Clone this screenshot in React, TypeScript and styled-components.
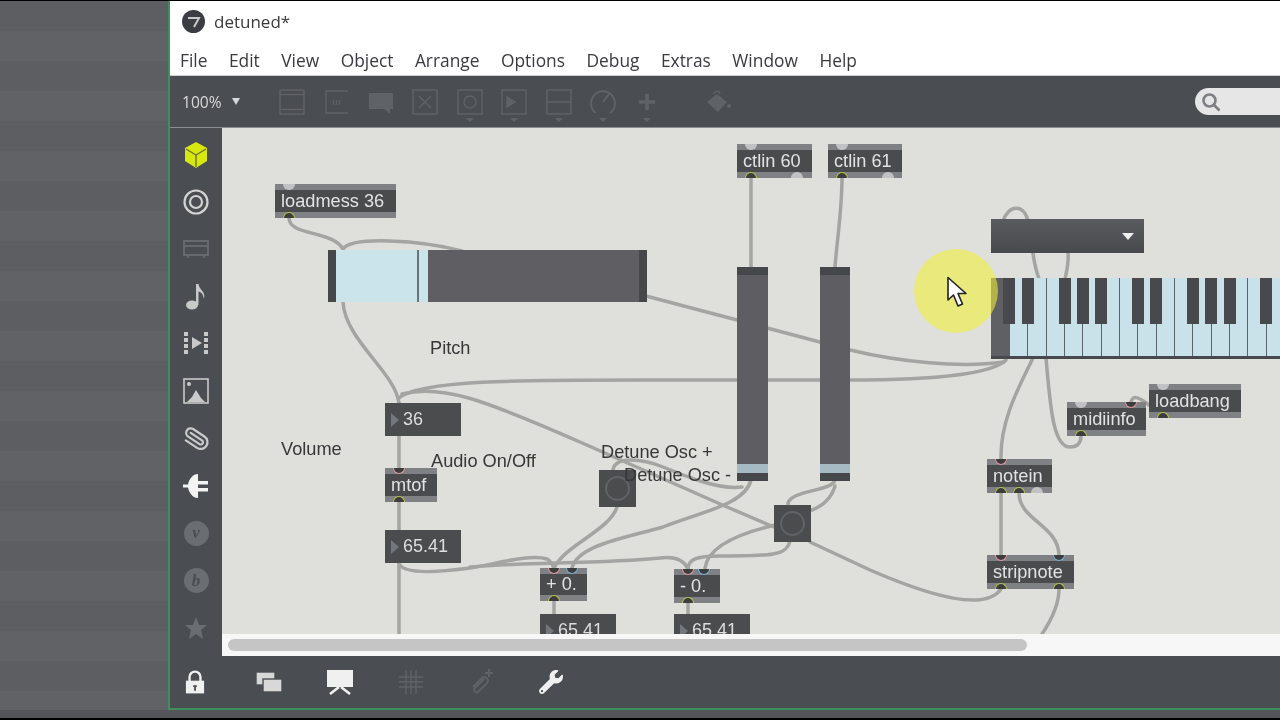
import React from 'react'
import styled, { createGlobalStyle } from 'styled-components'
import { FaWrench } from 'react-icons/fa'
import { Paperclip } from 'lucide-react'

const GlobalStyle = createGlobalStyle`
  html, body {
    margin: 0;
    padding: 0;
    background: #000;
    overflow: hidden;
  }
`

type Port = { at: number; kind: 'in' | 'cold' | 'out' | 'free'; side: 'top' | 'bottom' }

type PatchObject = { x: number; y: number; w: number; h: number; label: string; ports: Port[] }

const top = (at: number, kind: Port['kind']): Port => ({ at, kind, side: 'top' })
const bottom = (at: number, kind: Port['kind']): Port => ({ at, kind, side: 'bottom' })

const objects: PatchObject[] = [
  { x: 275, y: 184, w: 121, h: 34, label: 'loadmess 36', ports: [top(14, 'free'), bottom(14, 'out')] },
  { x: 737, y: 144, w: 75, h: 34, label: 'ctlin 60', ports: [top(14, 'free'), bottom(14, 'out'), bottom(60, 'free')] },
  { x: 828, y: 144, w: 74, h: 34, label: 'ctlin 61', ports: [top(14, 'free'), bottom(14, 'out'), bottom(60, 'free')] },
  { x: 385, y: 468, w: 52, h: 34, label: 'mtof', ports: [top(14, 'in'), bottom(14, 'out')] },
  { x: 540, y: 568, w: 47, h: 33, label: '+ 0.', ports: [top(14, 'in'), top(32, 'cold'), bottom(14, 'out')] },
  { x: 674, y: 569, w: 46, h: 34, label: '- 0.', ports: [top(14, 'in'), top(30, 'cold'), bottom(14, 'out')] },
  { x: 987, y: 459, w: 65, h: 34, label: 'notein', ports: [top(14, 'in'), bottom(14, 'out'), bottom(32, 'out'), bottom(50, 'free')] },
  { x: 987, y: 555, w: 87, h: 34, label: 'stripnote', ports: [top(14, 'in'), top(72, 'cold'), bottom(14, 'out'), bottom(72, 'out')] },
  { x: 1067, y: 402, w: 79, h: 34, label: 'midiinfo', ports: [top(14, 'free'), top(64, 'in'), bottom(14, 'out')] },
  { x: 1149, y: 384, w: 92, h: 34, label: 'loadbang', ports: [top(14, 'free'), bottom(14, 'out')] },
]

const numberBoxes = [
  { x: 385, y: 403, label: '36' },
  { x: 385, y: 530, label: '65.41' },
  { x: 540, y: 614, label: '65.41' },
  { x: 674, y: 614, label: '65.41' },
]

const comments = [
  { x: 430, y: 337, label: 'Pitch' },
  { x: 281, y: 438, label: 'Volume' },
  { x: 431, y: 450, label: 'Audio On/Off' },
  { x: 601, y: 441, label: 'Detune Osc +' },
  { x: 624, y: 464, label: 'Detune Osc -' },
]

const wires = [
  'M289 218C289 236 332 230 343 249',
  'M343 249C352 236 420 240 462 251',
  'M343 302C345 340 395 372 399 403',
  'M399 403V634',
  'M399 398C420 380 520 380 640 380L850 380C920 380 990 376 1006 360',
  'M646 296L737 320L850 350C900 362 960 368 1004 362',
  'M402 394C440 384 480 398 580 442L727 507L774 527',
  'M810 542L870 570C930 596 985 612 1001 589',
  'M751 178V267',
  'M842 178C842 210 837 240 835 267',
  'M617 507C610 530 565 545 554 568',
  'M751 480C745 505 700 512 663 527C625 538 578 545 572 568',
  'M399 563C402 575 440 572 470 568C500 563 530 554 547 559C551 561 552 564 554 568',
  'M470 567C520 562 600 564 660 558C675 556 684 560 688 569',
  'M742 487C720 490 690 478 663 467C640 458 612 456 613 472',
  'M835 480C832 492 785 490 788 506',
  'M835 486C832 496 825 505 812 510',
  'M775 525C745 532 708 545 705 568',
  'M790 540C788 556 770 556 720 556C695 556 688 560 688 569',
  'M1001 493V555',
  'M1019 493C1019 520 1058 525 1059 555',
  'M1059 589C1059 605 1050 622 1042 634',
  'M1033 358C1020 385 1000 420 1001 459',
  'M1046 358C1050 400 1052 447 1070 447C1078 447 1081 442 1081 436',
  'M1131 402C1133 394 1140 398 1149 405',
  'M1003 221C1008 205 1024 203 1028 221',
  'M1033 253C1034 262 1036 270 1039 279',
  'M1068 253C1069 262 1067 270 1065 279',
  'M554 601V614',
  'M688 603V614',
]

const blackKeys = [12.3, 31, 67.7, 86, 104.3, 140.6, 159.3, 196, 214.3, 232.6, 269]

const Page = styled.div`
  display: flex;
  flex-direction: column;
  width: 1280px;
  height: 720px;
  overflow: hidden;
  background: #000;
  filter: blur(0.45px);
`

const Desktop = styled.div`
  display: flex;
  flex: 1;
  min-height: 0;
  margin-top: 1px;
`

const Backdrop = styled.div`
  width: 168px;
  flex-shrink: 0;
  background: repeating-linear-gradient(to bottom, #5d5e61 0 30px, #616265 30px 60px);
`

const AppWindow = styled.div`
  flex: 1;
  min-width: 0;
  display: flex;
  flex-direction: column;
  border-left: 2px solid #3f8f5e;
  border-bottom: 2px solid #3f8f5e;
  overflow: hidden;
`

const TitleBar = styled.div`
  height: 37px;
  flex-shrink: 0;
  display: flex;
  align-items: center;
  gap: 9px;
  padding: 4px 0 0 12px;
  box-sizing: border-box;
  background: #fff;
  font: 17px 'Open Sans', sans-serif;
  color: #3a3a3a;
`

const MenuBar = styled.div`
  height: 38px;
  flex-shrink: 0;
  display: flex;
  align-items: center;
  gap: 21.5px;
  padding: 6px 0 0 10px;
  box-sizing: border-box;
  background: #fff;
  border-bottom: 1px solid #d0d0d0;
  font: 17.35px 'Open Sans', sans-serif;
  color: #3a3a40;
`

const Toolbar = styled.div`
  height: 51px;
  flex-shrink: 0;
  display: flex;
  align-items: center;
  background: #4a4d52;
  border-bottom: 1px solid #8b8d8e;
`

const Zoom = styled.div`
  width: 100px;
  flex-shrink: 0;
  display: flex;
  align-items: center;
  gap: 10px;
  padding-left: 12px;
  box-sizing: border-box;
  font: 15.6px 'Open Sans', sans-serif;
  color: #d8d8d8;
`

const DownCaret = styled.span`
  width: 0;
  height: 0;
  border-left: 4.5px solid transparent;
  border-right: 4.5px solid transparent;
  border-top: 7px solid #d8d8d8;
`

const ToolSlot = styled.div`
  position: relative;
  width: 44.4px;
  height: 28px;
  flex-shrink: 0;
  display: flex;
  align-items: center;
  justify-content: center;
`

const BucketSlot = styled(ToolSlot)`
  margin-left: 26px;
`

const ToolCaret = styled.span`
  position: absolute;
  left: 50%;
  top: 30px;
  margin-left: -4px;
  border-left: 4px solid transparent;
  border-right: 4px solid transparent;
  border-top: 4px solid #5f6267;
`

const SearchBox = styled.div`
  margin-left: auto;
  width: 105px;
  height: 27px;
  flex-shrink: 0;
  margin-right: -20px;
  display: flex;
  align-items: center;
  padding-left: 6px;
  box-sizing: border-box;
  border-radius: 14px;
  background: #e6e6e6;
`

const Body = styled.div`
  flex: 1;
  min-height: 0;
  display: flex;
`

const SideBar = styled.div`
  width: 52px;
  flex-shrink: 0;
  display: flex;
  flex-direction: column;
  align-items: center;
  padding-top: 3px;
  box-sizing: border-box;
  background: #4a4d52;
`

const SideSlot = styled.div`
  height: 47.35px;
  flex-shrink: 0;
  display: flex;
  align-items: center;
  justify-content: center;
`

const Badge = styled.span`
  width: 25px;
  height: 25px;
  border-radius: 50%;
  background: #6a6d72;
  display: flex;
  align-items: center;
  justify-content: center;
  font: italic bold 17px 'Liberation Serif', serif;
  color: #4a4d52;
`

const Clip = styled(Paperclip)`
  transform: rotate(-12deg) scaleX(-1);
`

const PatchColumn = styled.div`
  flex: 1;
  min-width: 0;
  display: flex;
  flex-direction: column;
`

const Canvas = styled.div`
  position: relative;
  flex: 1;
  min-height: 0;
  overflow: hidden;
  background: #dfdfdb;
`

const WireLayer = styled.svg`
  position: absolute;
  left: 0;
  top: 0;
  width: 100%;
  height: 100%;
  fill: none;
  stroke: #a4a4a2;
  stroke-width: 3.5;
  stroke-linecap: round;
`

const ScrollTrack = styled.div`
  height: 22px;
  flex-shrink: 0;
  display: flex;
  align-items: center;
  padding-left: 6px;
  background: #f7f7f7;
`

const ScrollThumb = styled.div`
  width: 799px;
  height: 12px;
  border-radius: 6px;
  background: #c5c5c5;
`

const BottomBar = styled.div`
  height: 52px;
  flex-shrink: 0;
  display: flex;
  align-items: center;
  background: #4a4d52;
`

const BottomSlot = styled.div<{ $w: number; $gap?: number }>`
  width: ${p => p.$w}px;
  margin-left: ${p => p.$gap || 0}px;
  flex-shrink: 0;
  display: flex;
  align-items: center;
  justify-content: center;
`

const FooterStrip = styled.div`
  height: 8px;
  flex-shrink: 0;
  background: #55565a;
  border-bottom: 2px solid #000;
`

const Placed = styled.div<{ $x: number; $y: number }>`
  position: absolute;
  left: ${p => p.$x - 222}px;
  top: ${p => p.$y - 128}px;
`

const Obj = styled(Placed)<{ $w: number; $h: number }>`
  width: ${p => p.$w}px;
  height: ${p => p.$h}px;
  display: flex;
  align-items: center;
  padding-left: 6px;
  box-sizing: border-box;
  background: linear-gradient(to bottom, #808184 0 6px, #4a4b4d 6px calc(100% - 6px), #808184 calc(100% - 6px));
  font: 18.2px 'Liberation Sans', sans-serif;
  color: #e2e2e2;
  white-space: nowrap;
`

const PortDot = styled.span<{ $at: number; $kind: Port['kind']; $side: Port['side'] }>`
  position: absolute;
  left: ${p => p.$at - 6}px;
  ${p => p.$side}: 0;
  width: 12px;
  height: 6px;
  box-sizing: border-box;
  border-radius: ${p => (p.$side === 'top' ? '0 0 6px 6px' : '6px 6px 0 0')};
  border: 1.5px solid ${p =>
    p.$kind === 'in' ? '#e09aa2' : p.$kind === 'cold' ? '#74b4d8' : p.$kind === 'out' ? '#b8c44c' : '#c2c2c4'};
  border-${p => p.$side}: 0;
  background: ${p => (p.$kind === 'free' ? '#c2c2c4' : '#3d3d3d')};
`

const NumberBox = styled(Placed)`
  width: 76px;
  height: 33px;
  display: flex;
  align-items: center;
  gap: 4px;
  padding-left: 6px;
  box-sizing: border-box;
  background: #4a4c4d;
  font: 18px 'Liberation Sans', sans-serif;
  color: #dedede;
`

const NumberArrow = styled.span`
  border-top: 7.5px solid transparent;
  border-bottom: 7.5px solid transparent;
  border-left: 8px solid #73767a;
`

const Comment = styled(Placed)`
  font: 18.2px/22px 'Liberation Sans', sans-serif;
  color: #37373a;
  white-space: nowrap;
`

const Toggle = styled(Placed)`
  width: 37px;
  height: 37px;
  display: flex;
  align-items: center;
  justify-content: center;
  background: #4a4c4e;
`

const ToggleRing = styled.span`
  width: 25px;
  height: 25px;
  box-sizing: border-box;
  border-radius: 50%;
  border: 2.5px solid #606266;
`

const HSlider = styled(Placed)`
  width: 319px;
  height: 52px;
  display: flex;
  background: #5f5f63;
`

const HCap = styled.div`
  width: 8px;
  background: #45474a;
`

const HFill = styled.div`
  position: relative;
  width: 92px;
  background: #cbe3ea;
`

const HKnob = styled.div`
  position: absolute;
  right: 9px;
  top: 0;
  bottom: 0;
  width: 2px;
  background: #6b7478;
`

const HRest = styled.div`
  flex: 1;
`

const VSlider = styled(Placed)<{ $w: number }>`
  width: ${p => p.$w}px;
  height: 214px;
  display: flex;
  flex-direction: column;
  background: #5e5e62;
`

const VCap = styled.div<{ $h: number }>`
  height: ${p => p.$h}px;
  background: #45474a;
`

const VRest = styled.div`
  flex: 1;
`

const VFill = styled.div`
  height: 9px;
  background: #a5bac2;
`

const Dropdown = styled(Placed)`
  width: 153px;
  height: 34px;
  display: flex;
  align-items: center;
  justify-content: flex-end;
  padding-right: 10px;
  box-sizing: border-box;
  background: linear-gradient(to bottom, #5a5b5e, #48494c);
`

const DropCaret = styled.span`
  border-left: 6.5px solid transparent;
  border-right: 6.5px solid transparent;
  border-top: 7px solid #f0f0f0;
`

const Keyboard = styled(Placed)`
  width: 300px;
  height: 81px;
  display: flex;
  box-sizing: border-box;
  border-bottom: 3px solid #47494c;
  background: #5f6064;
`

const KeyboardCap = styled.div`
  width: 19px;
  flex-shrink: 0;
`

const WhiteKey = styled.div`
  width: 18.33px;
  flex-shrink: 0;
  box-sizing: border-box;
  background: #c9e2ea;
  border-right: 1.6px solid #59656a;
`

const BlackKey = styled.div<{ $x: number }>`
  position: absolute;
  top: 0;
  left: ${p => p.$x}px;
  width: 12px;
  height: 46px;
  background: #47494c;
`

const Highlight = styled(Placed)`
  width: 84px;
  height: 84px;
  border-radius: 50%;
  background: rgba(240, 240, 55, 0.58);
`

const Pointer = styled(Placed)`
  width: 22px;
  height: 32px;
`

const Dim = '#5f6267'
const Pale = '#c9c9c9'

const ToolIcons = [
  <svg key="a" width="26" height="26" viewBox="0 0 26 26" fill="none" stroke={Dim} strokeWidth="1.5">
    <rect x="1" y="1" width="24" height="24" />
    <path d="M1 5.5H25M1 20.5H25" />
  </svg>,
  <svg key="b" width="26" height="26" viewBox="0 0 26 26" fill="none" stroke={Dim} strokeWidth="1.5">
    <path d="M24 2H2V24H24" />
    <path d="M9 16L10 11M12 16L13 11M15 16L16 11" strokeWidth="1.2" />
  </svg>,
  <svg key="c" width="26" height="26" viewBox="0 0 26 26" fill={Dim}>
    <path d="M1 4H25V20H22V25L16 20H1Z" />
  </svg>,
  <svg key="d" width="26" height="26" viewBox="0 0 26 26" fill="none" stroke={Dim} strokeWidth="1.5">
    <rect x="1" y="1" width="24" height="24" />
    <path d="M7 7L19 19M19 7L7 19" />
  </svg>,
  <svg key="e" width="26" height="26" viewBox="0 0 26 26" fill="none" stroke={Dim} strokeWidth="1.5">
    <rect x="1" y="1" width="24" height="24" />
    <circle cx="13" cy="13" r="6" />
  </svg>,
  <svg key="f" width="26" height="26" viewBox="0 0 26 26" fill="none" stroke={Dim} strokeWidth="1.5">
    <rect x="1" y="1" width="24" height="24" />
    <path d="M6 8L14 13L6 18Z" fill={Dim} />
  </svg>,
  <svg key="g" width="26" height="26" viewBox="0 0 26 26" fill="none" stroke={Dim} strokeWidth="1.5">
    <rect x="1" y="1" width="24" height="24" />
    <path d="M1 13H25" />
  </svg>,
  <svg key="h" width="26" height="26" viewBox="0 0 26 26" fill="none" stroke={Dim} strokeWidth="2">
    <path d="M6 24A12 12 0 1 1 20 24" />
    <path d="M13 13L19 5" />
  </svg>,
  <svg key="i" width="20" height="20" viewBox="0 0 22 22" fill={Dim}>
    <path d="M9 2H13V9H20V13H13V20H9V13H2V9H9Z" />
  </svg>,
]

const Logo = () => (
  <svg width="23" height="23" viewBox="0 0 23 23">
    <circle cx="11.5" cy="11.5" r="11.5" fill="#3b3d42" />
    <path d="M6 8H17L12 17" fill="none" stroke="#c9c9c9" strokeWidth="2" />
  </svg>
)

const Bucket = () => (
  <svg width="26" height="26" viewBox="0 0 26 26" fill={Dim}>
    <path d="M2 13L12 5L22 13L13 23Z" />
    <path d="M9 5C9 2 14 1 15 5" fill="none" stroke={Dim} strokeWidth="1.5" />
    <circle cx="24" cy="17" r="2" />
  </svg>
)

const Magnifier = () => (
  <svg width="20" height="20" viewBox="0 0 20 20" fill="none" stroke="#7d7f82" strokeWidth="2.6">
    <circle cx="8.5" cy="8.5" r="6" />
    <path d="M13 13L18.5 18.5" />
  </svg>
)

const SideIcons = [
  <svg key="cube" width="24" height="26" viewBox="0 0 24 26">
    <path d="M12 0L23 6V19L12 26L1 19V6Z" fill="#d6e80e" />
    <path d="M2 7L12 13L22 7M12 13V25" fill="none" stroke="#6b7130" strokeWidth="1.4" />
  </svg>,
  <svg key="target" width="26" height="26" viewBox="0 0 26 26" fill="none" stroke="#d2d2d2" strokeWidth="2.2">
    <circle cx="13" cy="13" r="11.5" />
    <circle cx="13" cy="13" r="6" />
  </svg>,
  <svg key="device" width="26" height="20" viewBox="0 0 26 20" fill="none" stroke="#666a6f" strokeWidth="2">
    <rect x="1" y="2" width="24" height="14" />
    <path d="M1 7H25M5 16V19M21 16V19" />
  </svg>,
  <svg key="note" width="22" height="28" viewBox="0 0 22 28" fill={Pale}>
    <ellipse cx="7" cy="22" rx="6" ry="4.6" />
    <path d="M11 22V1H13.5C14 7 21 8 19 16C18 11 16 9 13.5 8.5V22Z" />
  </svg>,
  <svg key="film" width="26" height="26" viewBox="0 0 26 26" fill={Pale}>
    <path d="M1 1H5V5H1ZM1 7H5V11H1ZM1 13H5V17H1ZM1 19H5V23H1ZM21 1H25V5H21ZM21 7H25V11H21ZM21 13H25V17H21ZM21 19H25V23H21ZM9 6L19 12L9 18Z" />
  </svg>,
  <svg key="image" width="26" height="26" viewBox="0 0 26 26">
    <rect x="1" y="1" width="24" height="24" fill="none" stroke={Pale} strokeWidth="1.6" />
    <circle cx="6" cy="6" r="2" fill={Pale} />
    <path d="M4 24L9 19L13 12L18 20L22 24Z" fill={Pale} />
  </svg>,
  <Clip key="clip" size={27} color={Pale} strokeWidth={2} />,
  <svg key="plug" width="26" height="26" viewBox="0 0 26 26" fill="#f4f4f4">
    <path d="M0 11.5H5C6 6 10 1 15 1V8H25V11.5H15V15H25V18.5H15V25C10 25 6 20 5 14.5H0Z" />
  </svg>,
  <Badge key="v">v</Badge>,
  <Badge key="b">b</Badge>,
  <svg key="star" width="24" height="24" viewBox="0 0 24 24" fill="#6a6d72">
    <path d="M12 1L15 9H23L17 14L19 23L12 18L5 23L7 14L1 9H9Z" />
  </svg>,
]

const BottomIcons = [
  {
    w: 50,
    icon: (
      <svg width="20" height="25" viewBox="0 0 22 26">
        <path d="M5 12V7A6 6 0 0 1 17 7V12" fill="none" stroke="#f0f0f0" strokeWidth="2.6" />
        <path d="M1 11H21V25H1Z" fill="#f0f0f0" />
        <path d="M9 16H13V18H12V22H10V18H9Z" fill="#4a4d52" />
      </svg>
    ),
  },
  {
    w: 71,
    gap: 13.5,
    icon: (
      <svg width="28" height="24" viewBox="0 0 28 24" fill="#d8d8d8" stroke="#4a4d52" strokeWidth="1.4">
        <rect x="1" y="2" width="19" height="13" />
        <rect x="8" y="9" width="19" height="13" />
      </svg>
    ),
  },
  {
    w: 71,
    icon: (
      <svg width="28" height="26" viewBox="0 0 28 26" fill="#f0f0f0">
        <rect x="1" y="1" width="26" height="17" />
        <path d="M13 18L4 25M15 18L24 25" stroke="#f0f0f0" strokeWidth="2.6" fill="none" />
      </svg>
    ),
  },
  {
    w: 71,
    icon: (
      <svg width="26" height="26" viewBox="0 0 26 26" fill="none" stroke={Dim} strokeWidth="1.4">
        <path d="M8 1V25M13 1V25M18 1V25M1 8H25M1 13H25M1 18H25" />
      </svg>
    ),
  },
  {
    w: 69,
    icon: (
      <svg width="28" height="28" viewBox="0 0 28 28" fill="none" stroke={Dim} strokeWidth="1.8">
        <path d="M17 11L8 20C5 23 9 26 12 23L20 15C23 12 18 7 15 10L6 19" />
        <path d="M22 1V9M18 5H26" strokeWidth="2" />
      </svg>
    ),
  },
  { w: 71, icon: <FaWrench size={24} color="#f0f0f0" /> },
]

const menus = ['File', 'Edit', 'View', 'Object', 'Arrange', 'Options', 'Debug', 'Extras', 'Window', 'Help']

const App = () => {
  return (
    <Page>
      <GlobalStyle />
      <Desktop>
        <Backdrop />
        <AppWindow>
          <TitleBar>
            <Logo />
            detuned*
          </TitleBar>
          <MenuBar>
            {menus.map(m => (
              <span key={m}>{m}</span>
            ))}
          </MenuBar>
          <Toolbar>
            <Zoom>
              100%
              <DownCaret />
            </Zoom>
            {ToolIcons.map((icon, i) => (
              <ToolSlot key={i}>
                {icon}
                {i >= 4 && <ToolCaret />}
              </ToolSlot>
            ))}
            <BucketSlot>
              <Bucket />
            </BucketSlot>
            <SearchBox>
              <Magnifier />
            </SearchBox>
          </Toolbar>
          <Body>
            <SideBar>
              {SideIcons.map((icon, i) => (
                <SideSlot key={i}>{icon}</SideSlot>
              ))}
            </SideBar>
            <PatchColumn>
              <Canvas>
                <WireLayer viewBox="222 128 1058 506" preserveAspectRatio="xMinYMin slice">
                  {wires.map(d => (
                    <path key={d} d={d} />
                  ))}
                </WireLayer>

                <HSlider $x={328} $y={250}>
                  <HCap />
                  <HFill>
                    <HKnob />
                  </HFill>
                  <HRest />
                  <HCap />
                </HSlider>
                <VSlider $x={737} $y={267} $w={31}>
                  <VCap $h={8} />
                  <VRest />
                  <VFill />
                  <VCap $h={8} />
                </VSlider>
                <VSlider $x={820} $y={267} $w={30}>
                  <VCap $h={8} />
                  <VRest />
                  <VFill />
                  <VCap $h={8} />
                </VSlider>

                {objects.map(o => (
                  <Obj key={o.label} $x={o.x} $y={o.y} $w={o.w} $h={o.h}>
                    {o.label}
                    {o.ports.map((p, i) => (
                      <PortDot key={i} $at={p.at} $kind={p.kind} $side={p.side} />
                    ))}
                  </Obj>
                ))}

                {numberBoxes.map(n => (
                  <NumberBox key={n.x + '-' + n.y} $x={n.x} $y={n.y}>
                    <NumberArrow />
                    {n.label}
                  </NumberBox>
                ))}

                <Toggle $x={599} $y={470}>
                  <ToggleRing />
                </Toggle>
                <Toggle $x={774} $y={505}>
                  <ToggleRing />
                </Toggle>

                {comments.map(c => (
                  <Comment key={c.label} $x={c.x} $y={c.y}>
                    {c.label}
                  </Comment>
                ))}

                <Dropdown $x={991} $y={219}>
                  <DropCaret />
                </Dropdown>

                <Keyboard $x={991} $y={278}>
                  <KeyboardCap />
                  {Array.from({ length: 15 }, (_, i) => (
                    <WhiteKey key={i} />
                  ))}
                  {blackKeys.map(x => (
                    <BlackKey key={x} $x={x} />
                  ))}
                </Keyboard>

                <Highlight $x={914} $y={249} />
                <Pointer $x={946} $y={276}>
                  <svg width="22" height="32" viewBox="0 0 22 32">
                    <path
                      d="M2 1.5V24L7.5 19L12 30L16.5 28L12 17.5H20Z"
                      fill="#fff"
                      stroke="#222"
                      strokeWidth="1.6"
                      strokeLinejoin="round"
                    />
                  </svg>
                </Pointer>
              </Canvas>
              <ScrollTrack>
                <ScrollThumb />
              </ScrollTrack>
            </PatchColumn>
          </Body>
          <BottomBar>
            {BottomIcons.map((b, i) => (
              <BottomSlot key={i} $w={b.w} $gap={b.gap}>
                {b.icon}
              </BottomSlot>
            ))}
          </BottomBar>
        </AppWindow>
      </Desktop>
      <FooterStrip />
    </Page>
  )
}

export default App
